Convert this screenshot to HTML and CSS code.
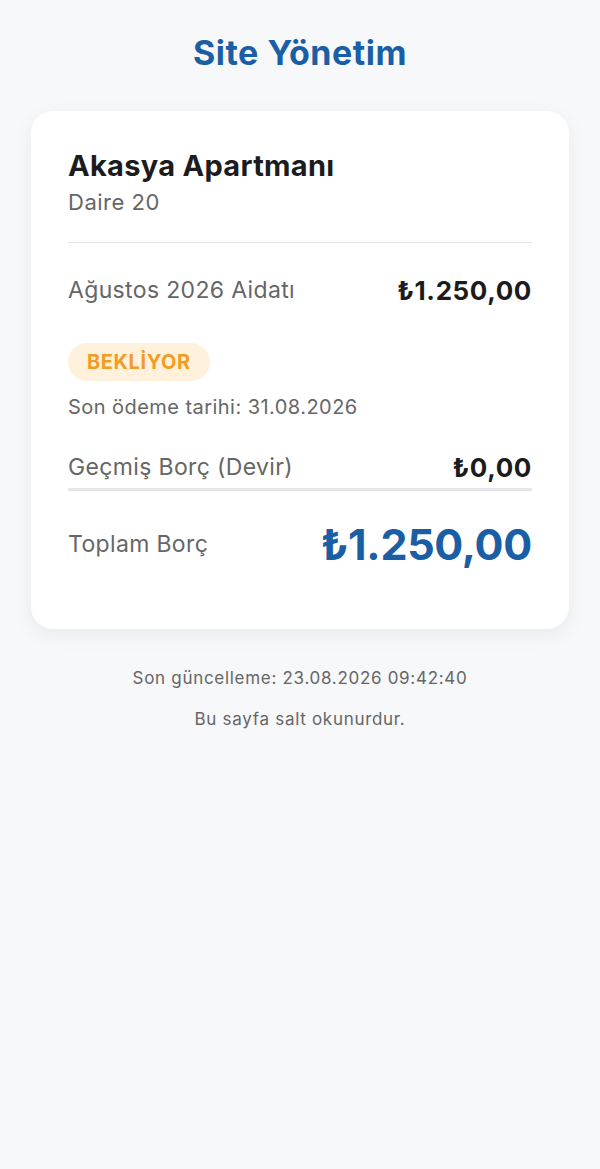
FILE: index.html
```html
<!DOCTYPE html>
<html lang="tr">
<head>
  <meta charset="UTF-8">
  <meta name="viewport" content="width=device-width, initial-scale=1.0">
  <title>Site Yönetim</title>
  <link rel="stylesheet" href="styles.css">
</head>
<body>
  <div class="page">
    <h1 class="title">Site Yönetim</h1>

    <div class="card">
      <div class="unit">
        <h2>Akasya Apartmanı</h2>
        <p class="flat">Daire 20</p>
      </div>

      <div class="row">
        <span class="label">Ağustos 2026 Aidatı</span>
        <span class="amount">₺1.250,00</span>
      </div>

      <span class="badge">BEKLİYOR</span>
      <p class="due">Son ödeme tarihi: 31.08.2026</p>

      <div class="row row-debt">
        <span class="label">Geçmiş Borç (Devir)</span>
        <span class="amount">₺0,00</span>
      </div>

      <div class="row row-total">
        <span class="label">Toplam Borç</span>
        <span class="total">₺1.250,00</span>
      </div>
    </div>

    <div class="footer">
      <p>Son güncelleme: 23.08.2026 09:42:40</p>
      <p>Bu sayfa salt okunurdur.</p>
    </div>
  </div>
</body>
</html>
```

FILE: styles.css
```css
/* Reset */
* {
  box-sizing: border-box;
  margin: 0;
  padding: 0;
}

body {
  font-family: Inter, 'Noto Sans', sans-serif;
  background-color: #f7f8fa;
  color: #1c1c1e;
}

.page {
  padding: 30px 31px;
}

/* Title */
.title {
  text-align: center;
  font-size: 34px;
  font-weight: 700;
  color: #1a5ea6;
  letter-spacing: 0.5px;
  line-height: 46px;
  margin-bottom: 35px;
}

/* Card */
.card {
  background-color: #ffffff;
  border-radius: 22px;
  box-shadow: 0 6px 20px rgba(0, 0, 0, 0.06);
  padding: 36px 37px 60px;
}

.unit {
  padding-bottom: 22px;
  border-bottom: 1px solid #e3e3e8;
  margin-bottom: 28px;
}

.unit h2 {
  font-size: 29px;
  font-weight: 700;
  line-height: 38px;
  letter-spacing: 0.3px;
}

.flat {
  font-size: 22px;
  color: #666;
  line-height: 35px;
  letter-spacing: 0.5px;
}

.row {
  display: flex;
  justify-content: space-between;
  align-items: center;
}

.label {
  font-size: 23px;
  color: #666;
  line-height: 38px;
  letter-spacing: 0.35px;
}

.amount {
  font-size: 26px;
  font-weight: 700;
  color: #1c1c1e;
  letter-spacing: 0.6px;
}

.badge {
  display: inline-block;
  margin-top: 34px;
  padding: 0 19px;
  height: 38px;
  line-height: 38px;
  border-radius: 19px;
  background-color: #fff1dc;
  color: #f39c24;
  font-size: 20px;
  font-weight: 700;
  letter-spacing: 0.6px;
}

.due {
  font-size: 20px;
  color: #666;
  line-height: 30px;
  letter-spacing: 0.45px;
  margin-top: 11px;
  margin-bottom: 26px;
}

.row-debt {
  padding-bottom: 2px;
  border-bottom: 3px solid #e5e5ea;
}

.row-total {
  margin-top: 28px;
}

.total {
  font-size: 43px;
  font-weight: 700;
  color: #1a5ea6;
  line-height: 50px;
  letter-spacing: -0.3px;
}

/* Footer */
.footer {
  margin-top: 36px;
  text-align: center;
  color: #666;
  font-size: 17px;
  line-height: 26px;
  letter-spacing: 0.7px;
}

.footer p + p {
  margin-top: 15px;
}
```
